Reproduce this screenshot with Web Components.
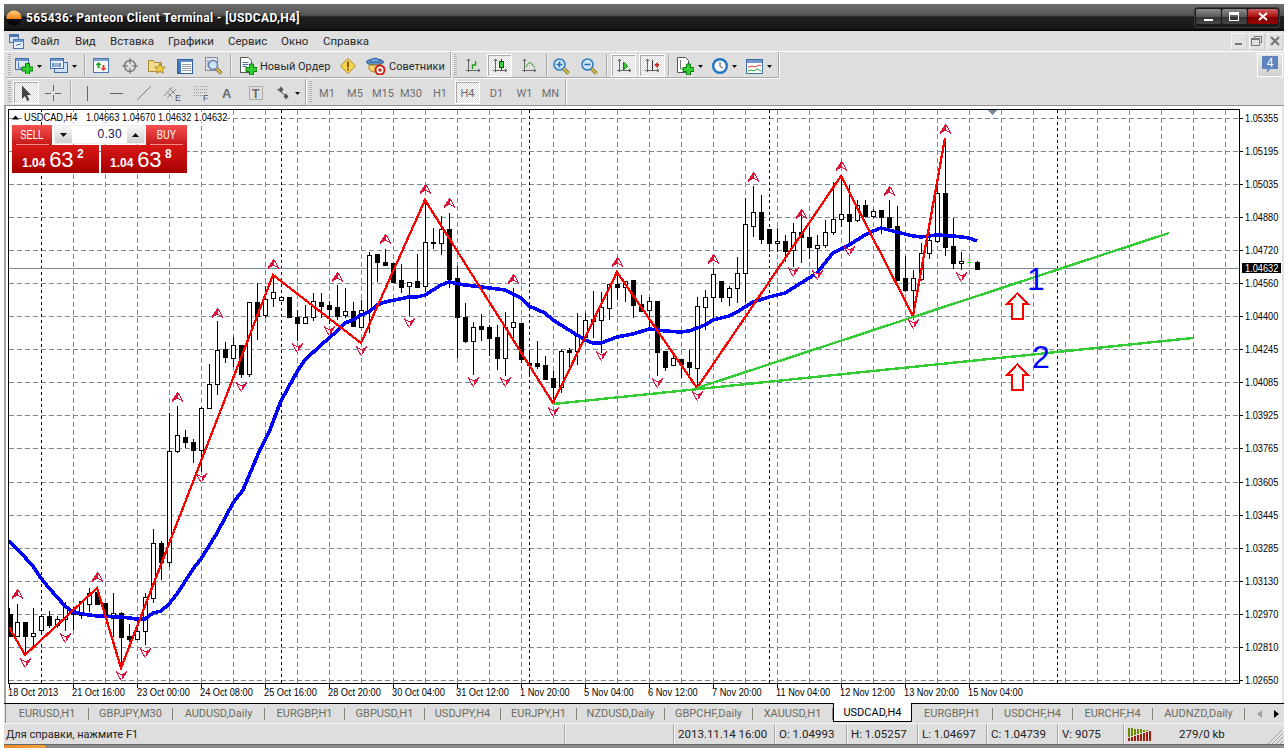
<!DOCTYPE html>
<html>
<head>
<meta charset="utf-8">
<title>Panteon Client Terminal</title>
<style>
  html, body { margin: 0; padding: 0; background: #fff; overflow: hidden; height: 748px; }
  body { font: 11px Roboto, "Liberation Sans", sans-serif; color: #222; }
</style>
</head>
<body>

<mt-terminal>
  <mt-titlebar>565436: Panteon Client Terminal - [USDCAD,H4]</mt-titlebar>
  <mt-menubar>
    <mt-menu-item w="44">Файл</mt-menu-item>
    <mt-menu-item w="35">Вид</mt-menu-item>
    <mt-menu-item w="58">Вставка</mt-menu-item>
    <mt-menu-item w="60">Графики</mt-menu-item>
    <mt-menu-item w="53">Сервис</mt-menu-item>
    <mt-menu-item w="42">Окно</mt-menu-item>
    <mt-menu-item w="60">Справка</mt-menu-item>
  </mt-menubar>

  <mt-toolrow h="28" line="1">
    <mt-toolbar>
      <tb-grip></tb-grip>
      <tb-btn w="31" icon="newchart" arrow></tb-btn>
      <tb-btn w="39" icon="profile" arrow></tb-btn>
      <tb-sep w="3"></tb-sep>
      <tb-btn w="30" icon="market"></tb-btn>
      <tb-btn w="27" icon="target"></tb-btn>
      <tb-btn w="28" icon="navigator"></tb-btn>
      <tb-btn w="28" icon="terminal"></tb-btn>
      <tb-btn w="30" icon="tester"></tb-btn>
      <tb-sep w="3"></tb-sep>
      <tb-btn w="105" icon="order" text>Новый Ордер</tb-btn>
      <tb-btn w="21" icon="warning"></tb-btn>
      <tb-btn w="92" icon="expert" text>Советники</tb-btn>
    </mt-toolbar>
    <mt-toolbar>
      <tb-grip w="5"></tb-grip>
      <tb-btn w="29" icon="bars"></tb-btn>
      <tb-btn w="25" icon="candle" active></tb-btn>
      <tb-btn w="33" icon="line"></tb-btn>
      <tb-sep w="2"></tb-sep>
      <tb-btn w="28" icon="zoomin"></tb-btn>
      <tb-btn w="28" icon="zoomout"></tb-btn>
      <tb-sep w="6"></tb-sep>
      <tb-btn w="25" icon="scroll" active gap="2"></tb-btn>
      <tb-btn w="26" icon="shift" active gap="3"></tb-btn>
      <tb-sep w="6"></tb-sep>
      <tb-btn w="37" icon="indicators" arrow></tb-btn>
      <tb-btn w="32" icon="clock" arrow></tb-btn>
      <tb-btn w="38" icon="templates" arrow></tb-btn>
    </mt-toolbar>
    <mt-message-btn count="4"></mt-message-btn>
  </mt-toolrow>

  <mt-toolrow h="27" bottom="1">
    <mt-toolbar flat>
      <tb-grip></tb-grip>
      <tb-btn w="26" icon="cursor" active></tb-btn>
      <tb-btn w="28" icon="cross"></tb-btn>
      <tb-sep w="6"></tb-sep>
      <tb-btn w="28" icon="vline"></tb-btn>
      <tb-btn w="30" icon="hline"></tb-btn>
      <tb-btn w="25" icon="trend"></tb-btn>
      <tb-btn w="31" icon="channel"></tb-btn>
      <tb-btn w="27" icon="fibo"></tb-btn>
      <tb-btn w="26" icon="ltext"></tb-btn>
      <tb-btn w="31" icon="tbox"></tb-btn>
      <tb-btn w="34" icon="arrows" arrow></tb-btn>
    </mt-toolbar>
    <mt-toolbar flat>
      <tb-grip w="5"></tb-grip>
      <tb-btn w="28" plain>M1</tb-btn>
      <tb-btn w="28" plain>M5</tb-btn>
      <tb-btn w="28" plain>M15</tb-btn>
      <tb-btn w="28" plain>M30</tb-btn>
      <tb-btn w="30" plain>H1</tb-btn>
      <tb-btn w="25" plain active>H4</tb-btn>
      <tb-btn w="33" plain>D1</tb-btn>
      <tb-btn w="23" plain>W1</tb-btn>
      <tb-btn w="29" plain>MN</tb-btn>
    </mt-toolbar>
  </mt-toolrow>

  <mt-chart>
    <trade-panel lots="0.30" big="1.04" sell="63" sellp="2" buy="63" buyp="8"></trade-panel>
  </mt-chart>

  <mt-tabs>
    <mt-tab w="83">EURUSD,H1</mt-tab>
    <mt-tab w="84">GBPJPY,M30</mt-tab>
    <mt-tab w="92">AUDUSD,Daily</mt-tab>
    <mt-tab w="80">EURGBP,H1</mt-tab>
    <mt-tab w="80">GBPUSD,H1</mt-tab>
    <mt-tab w="76">USDJPY,H4</mt-tab>
    <mt-tab w="76">EURJPY,H1</mt-tab>
    <mt-tab w="88">NZDUSD,Daily</mt-tab>
    <mt-tab w="88">GBPCHF,Daily</mt-tab>
    <mt-tab w="80">XAUUSD,H1</mt-tab>
    <mt-tab w="79" active>USDCAD,H4</mt-tab>
    <mt-tab w="81">EURGBP,H1</mt-tab>
    <mt-tab w="80">USDCHF,H4</mt-tab>
    <mt-tab w="80">EURCHF,H4</mt-tab>
    <mt-tab w="92">AUDNZD,Daily</mt-tab>
  </mt-tabs>

  <mt-status>
    <st-cell w="560" first>Для справки, нажмите F1</st-cell>
    <st-cell w="109"></st-cell>
    <st-cell w="101">2013.11.14 16:00</st-cell>
    <st-cell w="72">O: 1.04993</st-cell>
    <st-cell w="71">H: 1.05257</st-cell>
    <st-cell w="69">L: 1.04697</st-cell>
    <st-cell w="71">C: 1.04739</st-cell>
    <st-cell w="66">V: 9075</st-cell>
    <st-cell w="161" conn>279/0 kb</st-cell>
  </mt-status>
  <mt-taskstrip></mt-taskstrip>
</mt-terminal>

<script>
(function() {

  // tiny helper, every element builds its own shadow the same way
  function shadow(el, html) {
    var root = el.attachShadow({mode: 'open'});
    root.innerHTML = html;
    return root;
  }

  class Terminal extends HTMLElement {
    connectedCallback() {
      shadow(this, `<style>
        :host { display: flex; flex-direction: column; width: 1280px; height: 744px; margin: 4px 0 0 4px; background: #dedede; }
      </style><slot></slot>`);
    }
  }

  class TitleBar extends HTMLElement {
    connectedCallback() {
      shadow(this, `<style>
        :host { display: flex; align-items: center; height: 27px; flex: none; color: #fff;
                background: linear-gradient(#6e6e6e 0, #565656 11px, #3c3c3c 12px, #1f1f1f 13px, #1a1a1a 24px, #000 27px); }
        .logo { margin: 1px 4px 0 2px; width: 16px; height: 16px; }
        .txt { font: bold 12px Roboto, sans-serif; letter-spacing: .33px; white-space: nowrap; flex: 1; text-shadow: 1px 1px 0 #000; }
        .btns { display: flex; height: 17px; margin-right: 5px; padding: 1px; background: #1b1b1b; border-radius: 3px; box-shadow: 0 0 0 1px #3b3b3b; }
        .b { height: 15px; width: 25px; margin-right: 1px; border-radius: 2px; display: flex; align-items: center; justify-content: center;
             background: linear-gradient(#8c8c8c, #5a5a5a 50%, #333 55%, #474747); }
        .b.x { width: 30px; margin: 0; background: linear-gradient(#d06060, #b01010 50%, #7d0000 55%, #900); }
      </style>
      <svg class="logo" viewBox="0 0 16 16">
        <defs><linearGradient id="o" x1="0" y1="0" x2="0" y2="1"><stop offset="0" stop-color="#ffd27a"/><stop offset=".55" stop-color="#f08414"/><stop offset=".6" stop-color="#111"/><stop offset="1" stop-color="#000"/></linearGradient></defs>
        <ellipse cx="8" cy="8" rx="7.6" ry="7.4" fill="url(#o)"/>
      </svg>
      <span class="txt"><slot></slot></span>
      <div class="btns">
        <div class="b"><svg width="11" height="11"><rect x="1" y="8" width="9" height="2" fill="#fff"/></svg></div>
        <div class="b"><svg width="11" height="10"><rect x=".5" y=".5" width="9" height="8" fill="none" stroke="#fff"/><rect x="1" y="1" width="8" height="2" fill="#fff"/></svg></div>
        <div class="b x"><svg width="11" height="10"><path d="M1 1l8 7M9 1l-8 7" stroke="#fff" stroke-width="2"/></svg></div>
      </div>`);
    }
  }

  class MenuBar extends HTMLElement {
    connectedCallback() {
      shadow(this, `<style>
        :host { display: flex; align-items: center; height: 20px; flex: none; background: #dfdfdf; }
        .doc { margin: 0 7px 0 5px; flex: none; }
        .mdi { display: flex; gap: 2px; margin: 0 1px 0 auto; }
        .m { width: 16px; height: 17px; background: #e2e2e2; box-shadow: inset 1px 1px 0 #f4f4f4, inset -1px -1px 0 #cfcfcf; display: flex; align-items: center; justify-content: center; }
      </style>
      <svg class="doc" width="15" height="15" viewBox="0 0 15 15" shape-rendering="crispEdges">
        <rect x=".5" y=".5" width="9" height="8" fill="#cfe0f4" stroke="#4a76ad"/><rect x="1" y="1" width="8" height="2" fill="#4a76ad"/>
        <rect x="4.5" y="5.5" width="10" height="9" fill="#e5eefa" stroke="#4a76ad"/><rect x="5" y="6" width="9" height="2" fill="#6e96c7"/>
        <path d="M7 12l2-2 1 1 2-2" stroke="#4a76ad" fill="none"/>
      </svg>
      <slot></slot>
      <div class="mdi">
        <div class="m"><svg width="12" height="12" shape-rendering="crispEdges"><rect x="2" y="8" width="7" height="2" fill="#777"/></svg></div>
        <div class="m"><svg width="12" height="12" shape-rendering="crispEdges"><path d="M3.5 3.5v-2h7v6h-2M.5 3.5h8v7h-8z" fill="none" stroke="#777"/><rect x="1" y="4" width="7" height="1" fill="#777"/></svg></div>
        <div class="m"><svg width="12" height="12"><path d="M2 2l8 8M10 2l-8 8" stroke="#777" stroke-width="2.2"/></svg></div>
      </div>`);
    }
  }

  class MenuItem extends HTMLElement {
    connectedCallback() {
      shadow(this, `<style>:host { display: block; flex: none; width: ${this.getAttribute('w')}px; white-space: nowrap; font-size: 11.5px; color: #2a2a2a; }</style><slot></slot>`);
    }
  }

  class ToolRow extends HTMLElement {
    connectedCallback() {
      var bottom = this.hasAttribute('bottom') ? 'border-bottom: 1px solid #8e8e8e;' : '';
      var top = this.hasAttribute('line') ? 'border-top: 1px solid #fff;' : '';
      shadow(this, `<style>
        :host { display: flex; height: ${this.getAttribute('h')}px; box-sizing: border-box; flex: none; background: #dedede; padding-left: 2px; ${top} ${bottom} }
      </style><slot></slot>`);
    }
  }

  class Toolbar extends HTMLElement {
    connectedCallback() {
      shadow(this, `<style>
        :host { display: flex; align-items: flex-start; height: 26px; padding-top: 2px; box-sizing: border-box; border-bottom: 1px solid #a8a8a8; border-right: 1px solid #a8a8a8; box-shadow: 1px 1px 0 #fff; margin-right: 2px; }
        :host([flat]) { border-bottom: 0; box-shadow: 1px 0 0 #fff; }
      </style><slot></slot>`);
    }
  }

  class ToolGrip extends HTMLElement {
    connectedCallback() {
      var w = this.getAttribute('w') || 7;
      shadow(this, `<style>
        :host { display: flex; width: ${w}px; flex: none; height: 21px; justify-content: center; }
        i { display: block; width: 3px; background: repeating-linear-gradient(#adadad 0, #adadad 1px, #e8e8e8 1px, #e8e8e8 2px); }
      </style><i></i>`);
    }
  }

  class ToolSep extends HTMLElement {
    connectedCallback() {
      shadow(this, `<style>
        :host { display: flex; justify-content: center; width: ${this.getAttribute('w')}px; flex: none; height: 22px; }
        i { display: block; width: 1px; background: #a6a6a6; box-shadow: 1px 0 0 #efefef; }
      </style><i></i>`);
    }
  }

  // all the little toolbar pictures
  const AX = '<path d="M3.5 1v13M1 12.5h14M2 3l1.5-2 1.5 2M13 11l2 1.5-2 1.5" fill="none" stroke="#666"/>';
  const PLUS = (x, y) => `<path d="M${x+3.5} ${y+.5}h4v3.5h3.5v4h-3.5v3.5h-4v-3.5h-3.5v-4h3.5z" fill="#2fd02f" stroke="#0d7a0d"/>`;
  const HANDLE = '<path d="M10.5 10.5l5 5" stroke="#7d6a1c" stroke-width="3.4"/><path d="M10.5 10.5l5 5" stroke="#f0cd5a" stroke-width="1.6"/>';
  const ICONS = {
    newchart: [18, 16, '<rect x=".5" y=".5" width="13" height="11" fill="#dde9f7" stroke="#3f6fa6"/><rect x="1" y="1" width="12" height="2" fill="#6e96c7"/><path d="M3.5 4v6h7" fill="none" stroke="#4a76ad"/>' + PLUS(7, 5)],
    profile: [18, 16, '<rect x="4.5" y="4.5" width="13" height="10" fill="#cfdff3" stroke="#3f6fa6"/><rect x=".5" y=".5" width="13" height="10" fill="#eaf1fa" stroke="#3f6fa6"/><rect x="1" y="1" width="12" height="2" fill="#6e96c7"/><path d="M2 6h9M2 8h9M3 5v4M10 5v4" fill="none" stroke="#4a76ad"/>'],
    market: [17, 16, '<rect x=".5" y=".5" width="15" height="14" fill="#f7fafd" stroke="#4a76ad"/><rect x="1" y="1" width="14" height="2" fill="#7ba1cf"/><path d="M5.5 4l3 3h-2v3h-2v-3h-2z" fill="#1fa01f"/><path d="M10.5 13l3-3h-2v-3h-2v3h-2z" fill="#e0402a"/>'],
    target: [16, 16, '<circle cx="8" cy="8" r="5.5" fill="none" stroke="#777" stroke-width="1.4"/><path d="M8 0v6M8 10v6M0 8h6M10 8h6" stroke="#666"/>'],
    navigator: [18, 17, '<path d="M.5 13.5v-11h5l1 2h7v9z" fill="#f3d98a" stroke="#a8893a"/><path d="M12 5.5l1.6 3.4 3.6.4-2.7 2.4.8 3.6-3.3-1.9-3.3 1.9.8-3.6-2.7-2.4 3.6-.4z" fill="#f6cf3e" stroke="#a8893a"/>'],
    terminal: [16, 15, '<rect x=".5" y=".5" width="15" height="14" fill="#fff" stroke="#2e5f9e"/><rect x="1" y="1" width="14" height="2" fill="#5d8ac2"/><rect x="1" y="3" width="3" height="11" fill="#3f78bf"/><path d="M5 5.5h9M5 7.5h9M5 9.5h9M5 11.5h9" stroke="#99a"/>'],
    tester: [18, 18, '<rect x=".5" y=".5" width="12" height="13" fill="#e2e2ea" stroke="#8a8a92"/><path d="M3 3v7h7" fill="none" stroke="#888"/><circle cx="8" cy="8" r="4.5" fill="#cfe2f6" stroke="#5f85b5" stroke-width="1.5"/>' + '<path d="M11.5 11.5l5 5" stroke="#7d6a1c" stroke-width="3.4"/><path d="M11.5 11.5l5 5" stroke="#f0cd5a" stroke-width="1.6"/>'],
    order: [17, 18, '<path d="M.5.5h8l3 3v12h-11z" fill="#fff" stroke="#555"/><path d="M2.5 5.5h6M2.5 7.5h6M2.5 9.5h4" stroke="#4f6f9f"/>' + PLUS(6, 6.5)],
    warning: [16, 16, '<path d="M8 .5l7.5 7.5-7.5 7.5-7.5-7.5z" fill="#f7d44c" stroke="#a98a22"/><rect x="7" y="3.5" width="2" height="6" fill="#8a5a10"/><rect x="7" y="10.5" width="2" height="2" fill="#8a5a10"/>'],
    expert: [20, 18, '<ellipse cx="9" cy="5" rx="8.5" ry="3" fill="#5f90c9" stroke="#2f5f96"/><path d="M4 5c0-5 10-5 10 0z" fill="#6fa3dc" stroke="#2f5f96"/><path d="M3 8h12v4c-2 4-10 4-12 0z" fill="#f6d36a" stroke="#a9852a"/><circle cx="14" cy="13" r="4.5" fill="#fff" stroke="#c82014" stroke-width="2"/><rect x="12.5" y="11.5" width="3" height="3" fill="#c82014"/>'],
    bars: [16, 16, AX + '<path d="M7.5 11V7h3V3" fill="none" stroke="#14a014" stroke-width="1.4"/>'],
    candle: [16, 16, AX + '<path d="M9.5 1v11" stroke="#0a5a0a"/><rect x="7.5" y="3.5" width="4" height="6" fill="#35d035" stroke="#0a5a0a"/>'],
    line: [16, 16, AX + '<path d="M5 9c2-4 4-6 6-3s2 3 3 3" fill="none" stroke="#2d8a2d"/>'],
    zoomin: [17, 17, '<circle cx="6.5" cy="6.5" r="5.5" fill="#cfe6fa" stroke="#2f7fc4" stroke-width="1.6"/><path d="M3.5 6.5h6M6.5 3.5v6" stroke="#2a6fb0" stroke-width="1.6"/>' + HANDLE],
    zoomout: [17, 17, '<circle cx="6.5" cy="6.5" r="5.5" fill="#cfe6fa" stroke="#2f7fc4" stroke-width="1.6"/><path d="M3.5 6.5h6" stroke="#2a6fb0" stroke-width="1.6"/>' + HANDLE],
    scroll: [16, 16, AX + '<path d="M7.5 4l4 4-4 4z" fill="#32c832" stroke="#0d7a0d"/>'],
    shift: [16, 16, AX + '<path d="M8.5 2v11" stroke="#333"/><path d="M10 7l4-3v2h1v2h-1v2z" fill="#d82a1e"/>'],
    indicators: [17, 18, '<path d="M.5.5h8l3 3v12h-11z" fill="#fff" stroke="#555"/><path d="M3.5 3v9h5" fill="none" stroke="#777"/>' + PLUS(6, 6.5)],
    clock: [16, 16, '<circle cx="8" cy="8" r="6.8" fill="#fdfdfd" stroke="#1f74c4" stroke-width="2.4"/><path d="M8 4v4.5l3 1.5" fill="none" stroke="#555"/>'],
    templates: [17, 15, '<rect x=".5" y=".5" width="16" height="14" fill="#fff" stroke="#3f6fa6"/><rect x="1" y="1" width="15" height="3" fill="#6e96c7"/><path d="M2 8l4-1 3 1 4-2 2 1" fill="none" stroke="#d83a2a"/><path d="M2 12l3-1 3 1 3-2 4 2" fill="none" stroke="#2fa02f"/>'],
    cursor: [11, 16, '<path d="M1 .5l9 9.5H6l2.4 5-2.2 1L4 11l-3 3z" fill="#444"/>'],
    cross: [16, 16, '<path d="M8.5 0v6M8.5 10v6M0 8.5h6M10 8.5h6" stroke="#666"/>'],
    vline: [3, 15, '<path d="M1.5 0v15" stroke="#666"/>'],
    hline: [13, 3, '<path d="M0 1.5h13" stroke="#666"/>'],
    trend: [14, 14, '<path d="M.5 13.5l13-13" stroke="#777"/>'],
    channel: [18, 17, '<path d="M1 11l9-9M4 13l9-9M3 6l6 6M6 3l6 6" stroke="#888"/><text x="12" y="16" font-family="Liberation Sans" font-size="9" fill="#555">E</text>'],
    fibo: [16, 17, '<path d="M1 1.5h14M1 4.5h14M1 7.5h14M1 10.5h14" stroke="#999" stroke-dasharray="1 1"/><text x="10" y="16" font-family="Liberation Sans" font-size="9" fill="#555">F</text>'],
    ltext: [12, 18, '<text x="1" y="14" font-family="Liberation Sans" font-weight="bold" font-size="13" fill="#6a6a6a">A</text>'],
    tbox: [14, 14, '<rect x=".5" y=".5" width="13" height="13" fill="none" stroke="#777" stroke-dasharray="1 1"/><text x="3" y="11.5" font-family="Liberation Sans" font-weight="bold" font-size="12" fill="#6a6a6a">T</text>'],
    arrows: [15, 14, '<path d="M5 .5l2.5 3-2.5 3-2.5-3z" fill="#555"/><path d="M1 3l8 6" stroke="#555"/><path d="M10 7.5l2.5 3-2.5 3-2.5-3z" fill="#555"/>']
  };
  const DROP = '<svg width="5" height="3" style="margin-left:4px;flex:none"><path d="M0 0h5L2.5 3z" fill="#111"/></svg>';

  class ToolBtn extends HTMLElement {
    connectedCallback() {
      var w = this.getAttribute('w');
      var isText = this.hasAttribute('text');
      var gap = this.getAttribute('gap') || 0;
      var ic = ICONS[this.getAttribute('icon')];
      var svg = ic ? `<svg width="${ic[0]}" height="${ic[1]}" viewBox="0 0 ${ic[0]} ${ic[1]}" style="flex:none">${ic[2]}</svg>` : '';
      shadow(this, `<style>
        :host { display: flex; align-items: center; justify-content: ${isText ? 'flex-start' : 'center'}; flex: none; box-sizing: border-box; width: ${w}px; height: 23px;
                padding-top: 1px; margin-left: ${gap}px; ${isText ? 'padding-left: 8px;' : ''} }
        :host([active]) { background: #e6e6e6 repeating-conic-gradient(#fff 0 25%, #dcdcdc 0 50%) 0 0 / 2px 2px; box-shadow: inset 0 0 0 1px #fff, inset 1px 1px 0 1px #aaa; }
        .label { white-space: nowrap; color: ${this.hasAttribute('plain') ? '#6e6e6e' : '#2a2a2a'}; ${isText ? 'margin-left: 3px; font-size: 11px;' : ''} }
      </style>${svg}<span class="label"><slot></slot></span>${this.hasAttribute('arrow') ? DROP : ''}`);
    }
  }

  class MessageBtn extends HTMLElement {
    connectedCallback() {
      shadow(this, `<style>
        :host { display: flex; align-items: center; justify-content: center; width: 26px; height: 24px; margin: 1px 1px 0 auto; background: linear-gradient(#e9e9e9, #d0d0d0); box-shadow: inset 1px 1px 0 #fff, inset -1px -1px 0 #fff; }
        svg text { font: 12px "Liberation Sans", sans-serif; fill: #fff; }
      </style>
      <svg width="18" height="20" viewBox="0 0 18 20"><path d="M1 1h16v13H9l-3 4v-4H1z" fill="#5f84bb"/><text x="9" y="12" text-anchor="middle">${this.getAttribute('count')}</text></svg>`);
    }
  }

  // candle data read off the picture: [high, bodyTop, bodyBottom, low, white]
  const BARS = [
    [608,614,636,636,0],[604,622,636,636,1],[622,622,636,655,0],[608,633,636,646,1],[616,616,630,633,1],[611,616,625,628,0],
    [616,619,625,628,1],[602,607,619,631,1],[607,609,614,630,0],[601,601,615,619,1],[588,593,604,612,1],[588,592,604,604,0],
    [603,603,616,620,0],[593,613,618,637,1],[612,613,637,668,0],[624,636,639,642,0],[620,631,639,639,1],[593,597,631,645,1],
    [529,543,598,603,1],[541,543,562,580,0],[413,451,562,567,1],[406,435,451,453,1],[430,437,442,448,0],[439,442,450,463,0],
    [407,408,450,472,1],[364,384,408,409,1],[321,350,384,395,1],[342,349,357,363,0],[337,345,358,367,1],[345,345,374,378,0],
    [302,302,374,377,1],[283,302,316,340,0],[286,299,315,318,1],[275,292,298,307,1],[297,297,300,300,1],[297,297,317,318,0],
    [310,317,323,341,0],[305,317,323,324,1],[293,301,317,321,1],[293,302,306,318,0],[301,305,309,324,0],[285,307,316,320,0],
    [288,311,315,318,1],[302,311,326,326,0],[300,310,327,327,1],[252,255,311,333,1],[254,254,262,282,0],[249,262,265,266,0],
    [263,263,282,282,0],[264,280,287,293,0],[282,282,286,316,1],[254,281,287,288,0],[200,242,286,292,1],[228,242,243,249,0],
    [216,229,243,255,1],[213,229,279,288,0],[266,278,317,358,0],[303,317,341,343,0],[322,327,341,375,1],[314,326,329,341,0],
    [325,327,338,356,0],[325,337,358,370,0],[312,327,358,376,1],[288,322,327,343,1],[323,323,359,363,0],[353,363,365,376,0],
    [341,363,366,369,0],[356,365,379,379,0],[371,378,387,403,0],[349,351,387,393,1],[348,350,352,367,0],[313,336,351,365,1],
    [313,320,337,337,1],[291,319,321,338,0],[292,307,320,353,1],[284,284,308,320,1],[272,284,287,300,0],[281,281,287,302,1],
    [280,280,305,318,0],[295,304,311,311,0],[297,301,310,330,1],[301,301,352,376,0],[351,351,367,371,0],[352,358,365,365,1],
    [359,359,364,378,0],[350,362,367,377,0],[297,306,368,387,1],[290,297,307,330,1],[268,274,297,318,1],[281,281,297,302,0],
    [286,288,297,306,1],[257,273,288,303,1],[198,224,273,302,1],[186,212,226,237,1],[195,212,239,244,0],[229,229,243,252,0],
    [228,241,243,252,1],[235,241,251,262,0],[223,232,250,267,1],[210,232,237,263,0],[227,237,247,259,0],[235,245,248,273,1],
    [220,232,245,248,1],[182,219,232,235,1],[175,214,219,227,1],[185,214,221,243,0],[200,205,220,222,1],[200,205,216,217,0],
    [209,211,216,218,1],[210,210,217,234,0],[200,217,227,232,0],[206,226,280,281,0],[256,278,290,292,0],[270,278,290,313,1],
    [243,253,279,281,1],[232,240,253,259,1],[175,193,241,243,1],[138,193,247,256,0],[218,246,263,269,0],[252,261,263,270,1],
    [253,262,263,267,2],[261,262,269,269,0]
  ];
  const UPS = [[17,594],[97,577],[177,397],[217,313],[273,264],[337,277],[385,239],[425,189],[449,203],[513,279],[617,262],[713,259],[753,177],[801,214],[841,166],[889,191],[945,129]];
  const DOWNS = [[25,663],[65,638],[121,676],[145,653],[201,478],[241,387],[297,348],[329,331],[361,351],[409,323],[473,382],[505,382],[553,412],[601,356],[657,383],[697,396],[793,272],[817,275],[849,251],[913,324],[961,277]];
  const ZIGZAG = [[9,627],[25,655],[97,588],[121,668],[273,275],[361,343],[425,200],[553,403],[617,272],[697,388],[841,176],[913,316],[945,138]];
  const MA = [[9,541],[20,552],[33,566],[41,578],[49,588],[57,597],[65,606],[73,612],[89,615],[97,616],[121,617],[137,619],[145,619],[153,613],[161,611],[169,604],[177,594],[193,569],[201,559],[217,533],[233,503],[243,490],[259,452],[270,430],[280,403],[288,388],[297,372],[305,360],[321,345],[337,331],[345,323],[353,320],[361,315],[369,312],[377,305],[385,302],[409,297],[417,297],[425,295],[441,285],[449,282],[465,285],[481,287],[505,290],[513,294],[521,298],[529,306],[545,313],[553,320],[569,330],[577,335],[585,340],[593,343],[601,343],[617,337],[633,334],[649,329],[665,331],[681,332],[689,331],[705,325],[713,320],[729,316],[737,312],[745,307],[753,302],[769,297],[785,293],[793,288],[801,283],[817,273],[833,253],[849,245],[857,240],[865,235],[873,231],[881,228],[889,230],[897,232],[913,236],[921,237],[937,235],[953,236],[961,237],[969,238],[977,241]];
  const PRICES = ['1.05355','1.05195','1.05035','1.04880','1.04720','1.04560','1.04400','1.04245','1.04085','1.03925','1.03765','1.03605','1.03445','1.03285','1.03130','1.02970','1.02810','1.02650'];
  const TIMES = [[8,'18 Oct 2013'],[72,'21 Oct 16:00'],[137,'23 Oct 00:00'],[200,'24 Oct 08:00'],[264,'25 Oct 16:00'],[328,'28 Oct 20:00'],[392,'30 Oct 04:00'],[456,'31 Oct 12:00'],[520,'1 Nov 20:00'],[584,'5 Nov 04:00'],[648,'6 Nov 12:00'],[712,'7 Nov 20:00'],[776,'11 Nov 04:00'],[840,'12 Nov 12:00'],[904,'13 Nov 20:00'],[968,'15 Nov 04:00']];

  function pts(a) { return a.map(function(p) { return p.join(','); }).join(' '); }

  // chart labels are squeezed sideways, the terminal font is narrower than Arial
  function label(x, y, str, cls) {
    return `<text transform="translate(${x} ${y}) scale(.84 1)" class="${cls || ''}">${str}</text>`;
  }

  class Chart extends HTMLElement {
    drawGrid() {
      var s = '';
      PRICES.forEach(function(p, i) {
        var y = 118 + 33 * i + (i >= 11 ? 1 : 0);
        s += `<path d="M9 ${y + .5}H1239" class="grid"/><path d="M1240 ${y + .5}h3" stroke="#000"/>`;
        s += label(1245, y + 4, p);
      });
      for (var x = 41; x < 1239; x += 32) {
        if (x == 41) continue;
        s += `<path d="M${x + .5} 110V683" class="grid"/>`;
      }
      [41, 281, 529, 769, 1057].forEach(function(x) {
        s += `<path d="M${x + .5} 110V683" stroke="#000" stroke-dasharray="3 3"/>`;
      });
      TIMES.forEach(function(t, i) {
        s += `<path d="M${9 + 64 * i + .5} 684v4" stroke="#000"/>` + label(t[0], 696, t[1]);
      });
      return s;
    }

    drawBars() {
      var s = '';
      BARS.forEach(function(b, i) {
        var x = 9 + 8 * i;
        var green = b[4] == 2;
        s += `<path d="M${x + .5} ${b[0]}V${b[3]}" stroke="${green ? '#00ff00' : '#000'}"/>`;
        if (green) {
          s += `<path d="M${x - 2} ${b[1] + .5}h5" stroke="#00ff00"/>`;
          return;
        }
        var left = x - 2 + .5;
        var width = 4;
        // first bar is cut by the frame
        if (left < 9) { width = width - (9 - left) + .5; left = 9.5; }
        s += `<rect x="${left}" y="${b[1] + .5}" width="${width}" height="${b[2] - b[1]}" fill="${b[4] ? '#fff' : '#000'}" stroke="#000"/>`;
      });
      return s;
    }

    drawMarkers() {
      var s = '';
      UPS.forEach(function(p) {
        var x = p[0] + .5, y = p[1];
        s += `<path transform="translate(${x} ${y})" d="M0-5L-6 4-5 5 0 1 0-5z" fill="#dc143c"/><path transform="translate(${x} ${y})" d="M0-5L5.5 4.5 0 1" fill="#fff" stroke="#dc143c"/>`;
      });
      DOWNS.forEach(function(p) {
        var x = p[0] + .5, y = p[1];
        s += `<path transform="translate(${x} ${y})" d="M0 5L6-4 5-5 0-1 0 5z" fill="#dc143c"/><path transform="translate(${x} ${y})" d="M0 5L-5.5-4.5 0-1" fill="#fff" stroke="#dc143c"/>`;
      });
      return s;
    }

    connectedCallback() {
      var arrow = function(y) {
        return `<path d="M1017.5 ${y}L1028 ${y + 11}H1023V${y + 26}H1012V${y + 11}H1007Z" fill="#fff" stroke="#f00" stroke-width="2"/>`;
      };
      shadow(this, `<style>
        :host { display: block; position: relative; flex: none; height: 597px; background: #fff; }
        svg { display: block; }
        text { font: 11px "Liberation Sans", sans-serif; fill: #000; }
        .grid { stroke: #778899; stroke-dasharray: 5 3; }
        .sharp { shape-rendering: crispEdges; }
        .big { font: 32px "Liberation Sans", sans-serif; fill: #00f; }
        .bid { fill: #fff; }
        ::slotted(*) { position: absolute; left: 8px; top: 19px; }
      </style>
      <svg width="1280" height="597" viewBox="4 106 1280 597">
        <rect x="4" y="106" width="2" height="597" fill="#a4a4a4"/>
        <rect x="1282" y="106" width="2" height="597" fill="#e4e4e4"/>
        <g class="sharp">
          ${this.drawGrid()}
          <path d="M9 268.5H1239" stroke="#778899"/>
          ${this.drawBars()}
          <polyline points="${pts(MA)}" fill="none" stroke="#0000ff" stroke-width="3.6"/>
          <polyline points="${pts(ZIGZAG)}" fill="none" stroke="#ff0000" stroke-width="2.3"/>
          <path d="M697 388L1169 233M553 404L1193 338" stroke="#32cd32" stroke-width="2.4"/>
          ${this.drawMarkers()}
          ${arrow(293)}${arrow(364)}
          <path d="M987 110h10l-5 5z" fill="#778899"/>
          <rect x="8.5" y="109.5" width="1231" height="574" fill="none" stroke="#000"/>
          <rect x="1242" y="263" width="39" height="10" fill="#000"/>
        </g>
        ${label(1245, 272, '1.04632', 'bid')}
        <text x="1027" y="290" class="big">1</text>
        <text x="1032" y="368" class="big">2</text>
        <rect x="22" y="112" width="204" height="10" fill="#fff"/>
        <path d="M12 119.5h7l-3.5-4z" fill="#000"/>
        ${label(24, 121, 'USDCAD,H4')}${label(86, 121, '1.04663')}${label(122, 121, '1.04670')}${label(158, 121, '1.04632')}${label(194, 121, '1.04632')}
      </svg>
      <slot></slot>`);
    }
  }

  class TradePanel extends HTMLElement {
    connectedCallback() {
      var a = this.getAttribute.bind(this);
      shadow(this, `<style>
        :host { display: grid; grid-template-columns: 40px 3px 89px 2px 41px; grid-template-rows: 20px 28px; width: 175px; color: #fff; font-family: "Liberation Sans", sans-serif; }
        .act { background: linear-gradient(#f65050, #c41818); display: flex; flex-direction: column; align-items: center; justify-content: flex-end; font-size: 12px; }
        .act span { width: 33px; text-align: center; border-bottom: 1px solid #f48a8a; padding-bottom: 1px; line-height: 15px; }
        .act em { display: inline-block; font-style: normal; transform: scaleX(.78); }
        .sell { grid-column: 1; }
        .buy { grid-column: 5; }
        .spin { grid-column: 3; display: flex; height: 17px; box-shadow: 0 0 0 1px #eee; margin-top: 1px; }
        .sb { width: 17px; background: linear-gradient(#f8f8f8, #cfcfcf); display: flex; align-items: center; justify-content: center; }
        .val { flex: 1; background: #fff; color: #101060; text-align: right; font: 12px/17px "Liberation Sans", sans-serif; padding-right: 5px; letter-spacing: .3px; }
        .row { grid-column: 1 / -1; display: flex; gap: 2px; }
        .px { flex: 1; background: linear-gradient(#d81818, #a80000); display: flex; align-items: baseline; padding-left: 10px; height: 28px; line-height: 30px; }
        .px + .px { padding-left: 9px; }
        .s { font: bold 12px "Liberation Sans", sans-serif; margin-right: 4px; }
        .b { font-size: 22px; letter-spacing: -.4px; margin-right: 4px; }
        .p { font: bold 12px "Liberation Sans", sans-serif; position: relative; top: -9px; }
      </style>
      <div class="act sell"><span><em>SELL</em></span></div>
      <div></div>
      <div class="spin">
        <div class="sb"><svg width="7" height="4"><path d="M0 0h7L3.5 4z" fill="#111"/></svg></div>
        <div class="val">${a('lots')}</div>
        <div class="sb"><svg width="7" height="4"><path d="M0 4h7L3.5 0z" fill="#111"/></svg></div>
      </div>
      <div></div>
      <div class="act buy"><span><em>BUY</em></span></div>
      <div class="row">
        <div class="px"><span class="s">${a('big')}</span><span class="b">${a('sell')}</span><span class="p">${a('sellp')}</span></div>
        <div class="px"><span class="s">${a('big')}</span><span class="b">${a('buy')}</span><span class="p">${a('buyp')}</span></div>
      </div>`);
    }
  }

  class Tabs extends HTMLElement {
    connectedCallback() {
      shadow(this, `<style>
        :host { display: flex; height: 20px; flex: none; box-sizing: border-box; border-top: 1px solid #000; background: #dedede; padding-left: 2px; position: relative; box-shadow: inset 1px 0 0 #dedede, inset 2px 0 0 #8c8c8c; }
        .nav { display: flex; align-items: center; margin-left: 12px; gap: 12px; }
      </style>
      <slot></slot>
      <div class="nav">
        <svg width="5" height="8"><path d="M5 0v8L0 4z" fill="#a0a0a0"/></svg>
        <svg width="5" height="8"><path d="M0 0v8l5-4z" fill="#000"/></svg>
      </div>`);
    }
  }

  class Tab extends HTMLElement {
    connectedCallback() {
      shadow(this, `<style>
        :host { display: flex; align-items: center; flex: none; box-sizing: border-box; width: ${this.getAttribute('w')}px; color: #6c6c60; height: 19px; }
        span { flex: 1; text-align: center; white-space: nowrap; }
        i { width: 1px; height: 12px; background: #85857a; }
        :host([active]) { background: #fff; color: #000; margin-top: -1px; height: 19px; border: 1px solid #000; border-top: 0; }
        :host([active]) i { display: none; }
      </style><span><slot></slot></span><i></i>`);
    }
  }

  class StatusBar extends HTMLElement {
    connectedCallback() {
      shadow(this, `<style>
        :host { display: flex; height: 21px; flex: none; box-sizing: border-box; border-top: 1px solid #f2f2f2; background: #dedede; align-items: stretch; position: relative; }
        .grip { position: absolute; right: 1px; bottom: 0; }
      </style><slot></slot>
      <svg class="grip" width="15" height="14" stroke="#a4a4a4"><path d="M0 14L14 0M4 14L15 3M8 14l7-7M12 14l3-3"/></svg>`);
    }
  }

  class StatusCell extends HTMLElement {
    connectedCallback() {
      var first = this.hasAttribute('first');
      var conn = '';
      if (this.hasAttribute('conn')) {
        // the little connection meter
        var bars = '';
        for (var i = 0; i < 8; i++) {
          var red = 3 + i;
          var x = i * 3;
          bars += `<rect x="${x}" y="${i * .3}" width="2" height="${13 - red - i * .3 - 1}" fill="#6e8a00"/><rect x="${x}" y="${13 - red}" width="2" height="${red}" fill="#a01c0a"/>`;
        }
        conn = `<svg width="24" height="13" style="margin-right:27px;flex:none" shape-rendering="crispEdges">${bars}</svg>`;
      }
      shadow(this, `<style>
        :host { display: flex; align-items: center; flex: none; box-sizing: border-box; width: ${this.getAttribute('w')}px;
                white-space: nowrap; padding-left: ${first ? 2 : 5}px; ${first ? 'font-size: 11px;' : 'font-size: 11.5px; box-shadow: inset 1px 0 0 #a8a8a8, inset 2px 0 0 #f4f4f4;'} color: #222; }
      </style>${conn}<slot></slot>`);
    }
  }

  class TaskStrip extends HTMLElement {
    connectedCallback() {
      shadow(this, `<style>
        :host { display: block; height: 4px; flex: none; background: #8c8c8c; border-top: 1px solid #666; box-sizing: border-box; }
        i { display: block; width: 41px; height: 3px; background: linear-gradient(90deg, #f08c28, #f4a040); }
      </style><i></i>`);
    }
  }

  var defs = {
    'mt-terminal': Terminal, 'mt-titlebar': TitleBar, 'mt-menubar': MenuBar, 'mt-menu-item': MenuItem,
    'mt-toolrow': ToolRow, 'mt-toolbar': Toolbar, 'tb-grip': ToolGrip, 'tb-sep': ToolSep, 'tb-btn': ToolBtn,
    'mt-message-btn': MessageBtn, 'mt-chart': Chart, 'trade-panel': TradePanel, 'mt-tabs': Tabs, 'mt-tab': Tab,
    'mt-status': StatusBar, 'st-cell': StatusCell, 'mt-taskstrip': TaskStrip
  };
  Object.keys(defs).forEach(function(name) { customElements.define(name, defs[name]); });
})();
</script>
</body>
</html>
